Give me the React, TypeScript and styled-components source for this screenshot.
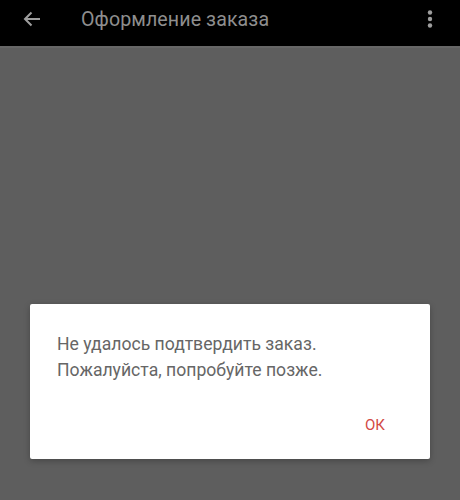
import styled, { createGlobalStyle } from "styled-components";

const Global = createGlobalStyle`
  html, body {
    margin: 0;
    padding: 0;
    background: #5e5e5e;
  }
  body {
    font-family: Roboto, "Liberation Sans", sans-serif;
  }
`;

const Screen = styled.div`
  width: 460px;
  height: 500px;
  display: flex;
  flex-direction: column;
  background: #5e5e5e;
  overflow: hidden;
`;

const TopBar = styled.header`
  height: 48px;
  box-sizing: border-box;
  padding: 0 20px 8px 22px;
  background: #000;
  display: flex;
  align-items: center;
  border-bottom: 2px solid #666;
`;

const IconButton = styled.button`
  width: 20px;
  height: 20px;
  padding: 0;
  border: 0;
  background: none;
  display: flex;
  align-items: center;
  justify-content: center;
  color: #9e9e9e;
`;

const Title = styled.h1`
  flex: 1;
  margin: 0 0 0 39px;
  font-size: 19.6px;
  font-weight: 400;
  color: #8e8e8e;
  letter-spacing: 0.1px;
`;

const Scrim = styled.main`
  flex: 1;
  padding: 256px 30px 0;
`;

const Dialog = styled.div`
  background: #fff;
  border-radius: 2px;
  box-shadow: 0 2px 6px rgba(0, 0, 0, 0.25);
  padding: 27px 29px 16px 27px;
  display: flex;
  flex-direction: column;
`;

const Message = styled.p`
  margin: 0;
  font-size: 17.6px;
  line-height: 26px;
  color: #666;
`;

const Actions = styled.div`
  display: flex;
  justify-content: flex-end;
  margin-top: 24px;
`;

const TextButton = styled.button`
  border: 0;
  background: none;
  font-family: inherit;
  font-size: 15px;
  line-height: 36px;
  padding: 0 16px;
  color: #d24a45;
  text-transform: uppercase;
`;

export default function App() {
  return (
    <>
      <Global />
      <Screen>
        <TopBar>
          <IconButton aria-label="back">
            <svg width="18" height="16" viewBox="0 0 18 16" fill="none" stroke="currentColor" strokeWidth="2">
              <path d="M17 8H2M8.5 1.5L2 8l6.5 6.5" />
            </svg>
          </IconButton>
          <Title>Оформление заказа</Title>
          <IconButton aria-label="menu">
            <svg width="6" height="18" viewBox="0 0 6 18" fill="currentColor">
              <circle cx="3" cy="2.5" r="2.2" />
              <circle cx="3" cy="9" r="2.2" />
              <circle cx="3" cy="15.5" r="2.2" />
            </svg>
          </IconButton>
        </TopBar>
        <Scrim>
          <Dialog>
            <Message>
              Не удалось подтвердить заказ.
              <br />
              Пожалуйста, попробуйте позже.
            </Message>
            <Actions>
              <TextButton>ОК</TextButton>
            </Actions>
          </Dialog>
        </Scrim>
      </Screen>
    </>
  );
}
